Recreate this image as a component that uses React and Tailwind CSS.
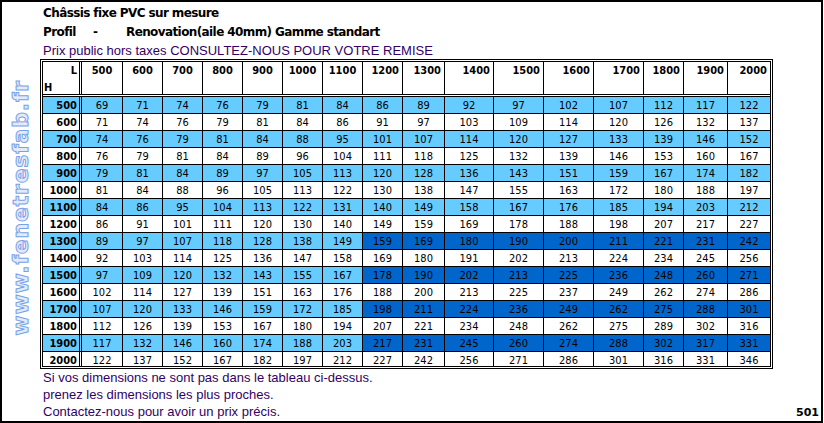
const cols = [500, 600, 700, 800, 900, 1000, 1100, 1200, 1300, 1400, 1500, 1600, 1700, 1800, 1900, 2000];

const widths = [
  "w-[41px]", "w-[40px]", "w-[40px]", "w-[40px]", "w-[40px]", "w-[40px]", "w-[40px]", "w-[40px]",
  "w-[42px]", "w-[49px]", "w-[50px]", "w-[50px]", "w-[50px]", "w-[40px]", "w-[44px]", "w-[42px]",
];

const rows = [
  [500, 69, 71, 74, 76, 79, 81, 84, 86, 89, 92, 97, 102, 107, 112, 117, 122],
  [600, 71, 74, 76, 79, 81, 84, 86, 91, 97, 103, 109, 114, 120, 126, 132, 137],
  [700, 74, 76, 79, 81, 84, 88, 95, 101, 107, 114, 120, 127, 133, 139, 146, 152],
  [800, 76, 79, 81, 84, 89, 96, 104, 111, 118, 125, 132, 139, 146, 153, 160, 167],
  [900, 79, 81, 84, 89, 97, 105, 113, 120, 128, 136, 143, 151, 159, 167, 174, 182],
  [1000, 81, 84, 88, 96, 105, 113, 122, 130, 138, 147, 155, 163, 172, 180, 188, 197],
  [1100, 84, 86, 95, 104, 113, 122, 131, 140, 149, 158, 167, 176, 185, 194, 203, 212],
  [1200, 86, 91, 101, 111, 120, 130, 140, 149, 159, 169, 178, 188, 198, 207, 217, 227],
  [1300, 89, 97, 107, 118, 128, 138, 149, 159, 169, 180, 190, 200, 211, 221, 231, 242],
  [1400, 92, 103, 114, 125, 136, 147, 158, 169, 180, 191, 202, 213, 224, 234, 245, 256],
  [1500, 97, 109, 120, 132, 143, 155, 167, 178, 190, 202, 213, 225, 236, 248, 260, 271],
  [1600, 102, 114, 127, 139, 151, 163, 176, 188, 200, 213, 225, 237, 249, 262, 274, 286],
  [1700, 107, 120, 133, 146, 159, 172, 185, 198, 211, 224, 236, 249, 262, 275, 288, 301],
  [1800, 112, 126, 139, 153, 167, 180, 194, 207, 221, 234, 248, 262, 275, 289, 302, 316],
  [1900, 117, 132, 146, 160, 174, 188, 203, 217, 231, 245, 260, 274, 288, 302, 317, 331],
  [2000, 122, 137, 152, 167, 182, 197, 212, 227, 242, 256, 271, 286, 301, 316, 331, 346],
];

const tahoma = "font-['DejaVu_Sans_Condensed','DejaVu_Sans',sans-serif] [font-stretch:condensed]";
const verdana = "font-['DejaVu_Sans',Verdana,sans-serif]";
const arial = "font-['Liberation_Sans',Arial,sans-serif]";

function cellBg(r, c) {
  if (r % 2 === 1) return "bg-white";
  if (rows[r][0] >= 1300 && c >= 7) return "bg-[#0066cc]";
  return "bg-[#66ccff]";
}

function PriceTable() {
  return (
    <div className={`w-[733px] border-[3px] border-double border-black text-[11px] text-black ${tahoma}`}>
      <div className="flex h-[35px] border-b-[3px] border-double border-black font-bold leading-[17px]">
        <div className="w-[39px] border-r-[3px] border-double border-black flex flex-col">
          <span className="text-right pr-[2px]">L</span>
          <span className="pl-[1px]">H</span>
        </div>
        {cols.map((c, i) => (
          <div
            key={c}
            className={`${widths[i]} ${i < 15 ? "border-r border-black" : ""} ${i < 7 ? "text-center" : "text-right pr-[3px]"}`}
          >
            {c}
          </div>
        ))}
      </div>
      {rows.map((row, r) => (
        <div
          key={row[0]}
          className={`flex ${r < 15 ? "h-[17px] border-b border-black" : "h-[14px]"} leading-[16px]`}
        >
          <div className={`w-[39px] border-r-[3px] border-double border-black text-right pr-[2px] pt-[1px] font-bold ${r % 2 === 0 ? "bg-[#66ccff]" : "bg-white"}`}>
            {row[0]}
          </div>
          {row.slice(1).map((v, c) => (
            <div
              key={c}
              className={`${widths[c]} ${c < 15 ? "border-r border-black" : ""} ${cellBg(r, c)} text-center pt-[1px]`}
            >
              {v}
            </div>
          ))}
        </div>
      ))}
    </div>
  );
}

export default function App() {
  return (
    <div className="w-[823px] h-[423px] border-2 border-black bg-white flex overflow-hidden">
      <div className="w-[38px] flex justify-center items-start pt-[78px]">
        <div className="[writing-mode:vertical-rl] rotate-180 font-['DejaVu_Sans',sans-serif] font-bold text-[22px] leading-[24px] tracking-[0.8px] text-[#e2eafb] [-webkit-text-stroke:1px_#78a2e8]">
          www.fenetresfab.fr
        </div>
      </div>
      <div className="flex-1 flex flex-col">
        <div className={`pl-[3px] pt-[2px] font-bold text-[12px] tracking-[-0.6px] text-black ${verdana}`}>
          <div className="leading-[18px]">Châssis fixe PVC sur mesure</div>
          <div className="flex leading-[20px]">
            <span className="w-[50px]">Profil</span>
            <span className="w-[33px]">-</span>
            <span>Renovation(aile 40mm) Gamme standart</span>
          </div>
        </div>
        <div className={`pl-[3px] mt-[2px] text-[13px] leading-[13px] text-[#330066] ${arial}`}>
          Prix public hors taxes CONSULTEZ-NOUS POUR VOTRE REMISE
        </div>
        <div className="mt-[2px]">
          <PriceTable />
        </div>
        <div className={`pl-[3px] text-[13px] leading-[17px] text-[#330066] ${arial}`}>
          <div>Si vos dimensions ne sont pas dans le tableau ci-dessus.</div>
          <div>prenez les dimensions les plus proches.</div>
          <div className="flex justify-between">
            <span>Contactez-nous pour avoir un prix précis.</span>
            <span className={`self-end pr-[2px] font-bold text-[11px] leading-[14px] text-black ${verdana}`}>501</span>
          </div>
        </div>
      </div>
    </div>
  );
}
